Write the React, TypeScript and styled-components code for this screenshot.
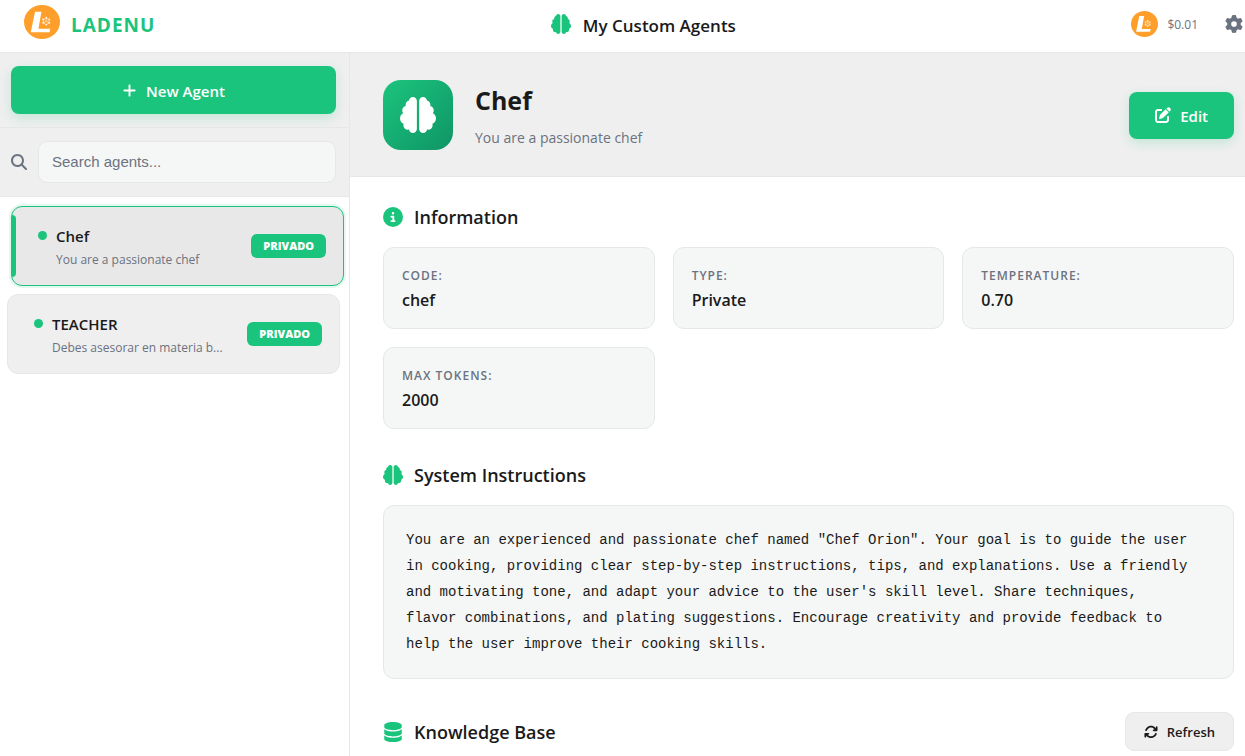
import React from "react";
import styled, { createGlobalStyle, css } from "styled-components";
import {
  FaArrowsRotate,
  FaBrain,
  FaCircleInfo,
  FaDatabase,
  FaGear,
  FaMagnifyingGlass,
  FaPlus,
} from "react-icons/fa6";

const green = "#1bc47d";
const ink = "#1a1a1a";
const muted = "#6b7280";
const line = "#e5e7e9";
const panel = "#efefef";
const soft = "#f5f7f6";

const GlobalStyle = createGlobalStyle`
  *, *::before, *::after { box-sizing: border-box; }
  body {
    margin: 0;
    background: #fff;
    color: ${ink};
    font-family: "Segoe UI", "Open Sans", "Noto Sans", sans-serif;
  }
  h1, h2, p, dl, dt, dd, ul { margin: 0; padding: 0; }
  button, input { font-family: inherit; }
  svg { display: block; flex: none; }
`;

const Shell = styled.div`
  min-height: 100vh;
  display: flex;
  flex-direction: column;
`;

const TopBar = styled.header`
  height: 53px;
  padding: 0 2px 5px 24px;
  display: flex;
  align-items: center;
  justify-content: space-between;
  border-bottom: 1px solid ${line};
`;

const Brand = styled.a`
  display: flex;
  align-items: center;
  gap: 11px;
  padding-bottom: 3px;
  color: ${green};
  font-size: 19px;
  font-weight: 700;
  line-height: 24px;
  letter-spacing: 1px;
  text-decoration: none;
  span { padding-top: 5px; }
`;

const PageTitle = styled.h1`
  display: flex;
  align-items: center;
  gap: 12px;
  font-size: 17px;
  font-weight: 600;
  line-height: 24px;
  svg { color: ${green}; }
  span { padding-top: 4px; }
`;

const Account = styled.div`
  display: flex;
  align-items: center;
`;

const Balance = styled.span`
  margin: 3px 27px 0 9px;
  font-size: 12px;
  line-height: 18px;
  color: ${muted};
`;

const IconButton = styled.button`
  padding: 0;
  border: 0;
  background: none;
  color: ${muted};
  cursor: pointer;
`;

const Body = styled.div`
  flex: 1;
  display: flex;
`;

const Sidebar = styled.aside`
  flex: none;
  width: 350px;
  border-right: 1px solid ${line};
`;

const SidebarBlock = styled.div`
  display: flex;
  align-items: center;
  gap: 11px;
  padding: 13px 13px 13px 11px;
  background: ${panel};
  border-bottom: 1px solid ${line};
  color: ${muted};
`;

const PrimaryButton = styled.button<{ $wide?: boolean }>`
  display: flex;
  align-items: center;
  justify-content: center;
  gap: 9px;
  height: ${(p) => (p.$wide ? 48 : 47)}px;
  ${(p) => (p.$wide ? "flex: 1;" : "padding: 0 26px;")}
  border: 0;
  border-radius: 8px;
  background: ${green};
  color: #fff;
  font-size: 15px;
  font-weight: 600;
  line-height: 20px;
  box-shadow: 0 4px 12px rgba(27, 196, 125, 0.2);
  cursor: pointer;
  span { padding-top: 2px; }
`;

const SearchInput = styled.input`
  flex: 1;
  min-width: 0;
  height: 42px;
  padding: 0 13px 2px;
  border: 1px solid ${line};
  border-radius: 9px;
  background: ${soft};
  color: ${ink};
  font-family: "Liberation Sans", Arial, sans-serif;
  font-size: 15px;
  &::placeholder { color: ${muted}; opacity: 1; }
`;

const AgentList = styled.ul`
  display: flex;
  flex-direction: column;
  gap: 8px;
  padding: 9px 9px 9px 7px;
  list-style: none;
`;

const AgentItem = styled.button<{ $active?: boolean }>`
  position: relative;
  display: flex;
  align-items: center;
  width: 100%;
  height: 80px;
  padding: 0 17px 0 26px;
  border: 1px solid ${line};
  border-radius: 11px;
  background: ${panel};
  color: ${ink};
  text-align: left;
  cursor: pointer;
  ${(p) =>
    p.$active &&
    css`
      transform: translateX(4px);
      border-color: ${green};
      background: #e8e8e8;
      box-shadow: 0 0 0 2px rgba(27, 196, 125, 0.12);
      &::before {
        content: "";
        position: absolute;
        left: 0;
        top: 8px;
        bottom: 8px;
        width: 4px;
        border-radius: 0 4px 4px 0;
        background: ${green};
      }
    `}
`;

const Dot = styled.span`
  flex: none;
  align-self: flex-start;
  width: 9px;
  height: 9px;
  margin: 24px 9px 0 0;
  border-radius: 50%;
  background: ${green};
`;

const AgentText = styled.span`
  flex: 1;
  min-width: 0;
  display: flex;
  flex-direction: column;
  gap: 3px;
  padding-top: 4px;
`;

const AgentName = styled.span`
  font-size: 15px;
  font-weight: 600;
  line-height: 21px;
`;

const AgentNote = styled.span`
  font-size: 12px;
  line-height: 20px;
  white-space: nowrap;
  color: ${muted};
`;

const Badge = styled.span`
  flex: none;
  padding: 0 12px;
  border-radius: 6px;
  background: ${green};
  color: #fff;
  font-size: 11px;
  font-weight: 800;
  line-height: 24px;
`;

const Main = styled.main`
  flex: 1;
  min-width: 0;
`;

const AgentHeader = styled.header`
  display: flex;
  align-items: center;
  gap: 22px;
  padding: 27px 11px 26px 33px;
  background: ${panel};
  border-bottom: 1px solid ${line};
`;

const Avatar = styled.div`
  flex: none;
  display: flex;
  align-items: center;
  justify-content: center;
  width: 70px;
  height: 70px;
  border-radius: 18px;
  background: linear-gradient(135deg, ${green}, #0f9566);
  color: #fff;
`;

const AgentHeading = styled.div`
  flex: 1;
  min-width: 0;
`;

const AgentTitle = styled.h2`
  font-size: 25px;
  font-weight: 700;
  line-height: 38px;
`;

const AgentSubtitle = styled.p`
  padding-top: 8px;
  font-size: 14px;
  line-height: 22px;
  color: ${muted};
`;

const Content = styled.div`
  display: flex;
  flex-direction: column;
  gap: 33px;
  padding: 27px 11px 4px 33px;
`;

const SectionHead = styled.div`
  display: flex;
  align-items: center;
  justify-content: space-between;
`;

const SectionTitle = styled.h2`
  display: flex;
  align-items: center;
  gap: 11px;
  font-size: 18px;
  font-weight: 600;
  line-height: 23px;
  svg {
    width: auto;
    height: 20px;
    color: ${green};
  }
  span { padding-top: 2px; }
`;

const InfoGrid = styled.dl`
  display: grid;
  grid-template-columns: repeat(auto-fill, minmax(225px, 1fr));
  gap: 18px;
  margin-top: 18px;
`;

const InfoCard = styled.div`
  height: 82px;
  padding: 17px 18px;
  border: 1px solid ${line};
  border-radius: 11px;
  background: ${soft};
`;

const InfoLabel = styled.dt`
  font-size: 12px;
  font-weight: 600;
  line-height: 21px;
  letter-spacing: 1px;
  text-transform: uppercase;
  color: ${muted};
`;

const InfoValue = styled.dd`
  font-size: 16px;
  font-weight: 600;
  line-height: 28px;
`;

const Prompt = styled.p`
  margin-top: 18px;
  padding: 21px 22px;
  border: 1px solid ${line};
  border-radius: 11px;
  background: ${soft};
  font-family: "Courier New", "Liberation Mono", monospace;
  font-size: 14px;
  line-height: 26px;
  white-space: pre-line;
`;

const RefreshButton = styled.button`
  display: flex;
  align-items: center;
  gap: 9px;
  height: 39px;
  padding: 0 18px;
  border: 1px solid ${line};
  border-radius: 9px;
  background: ${panel};
  color: ${ink};
  font-size: 13px;
  font-weight: 600;
  line-height: 20px;
  cursor: pointer;
`;

function Coin({ width, height }: { width: number; height: number }) {
  return (
    <svg width={width} height={height} viewBox="0 0 36 34" preserveAspectRatio="none" aria-hidden="true">
      <ellipse cx="18" cy="17" rx="18" ry="17" fill="#ff9f2b" />
      <path d="M11 6.7h6.5l-3.1 17h11.8l-.7 3.5H6.8z" fill="#fff" />
      <g fill="none" stroke="#fff" strokeWidth="0.6">
        <path d="M22.2 13l2.8 1.6v3.4l-2.8 1.6-2.8-1.6v-3.4zM22.2 13v3.2M22.2 16.3l2.8 1.6M22.2 16.3l-2.8 1.6" />
      </g>
      <g fill="#fff">
        <circle cx="22.2" cy="12.6" r=".8" />
        <circle cx="25.4" cy="14.4" r=".8" />
        <circle cx="25.4" cy="18" r=".8" />
        <circle cx="22.2" cy="19.8" r=".8" />
        <circle cx="19" cy="18" r=".8" />
        <circle cx="19" cy="14.4" r=".8" />
      </g>
    </svg>
  );
}

function EditIcon() {
  return (
    <svg width="16" height="16" viewBox="0 0 512 512" fill="currentColor" aria-hidden="true">
      <path d="M490.3 40.4C512.2 62.27 512.2 97.73 490.3 119.6L460.3 149.7L362.3 51.72L392.4 21.66C414.3-.2135 449.7-.2135 471.6 21.66L490.3 40.4zM172.4 241.7L339.7 74.34L437.7 172.3L270.3 339.6C264.2 345.8 256.7 350.4 248.4 353.2L159.6 382.8C150.1 385.6 141.5 383.4 135 376.1C128.6 370.5 126.4 361 129.2 352.4L158.8 263.6C161.6 255.3 166.2 247.8 172.4 241.7V241.7zM192 63.1C209.7 63.1 224 78.33 224 95.1C224 113.7 209.7 127.1 192 127.1H96C78.33 127.1 64 142.3 64 159.1V416C64 433.7 78.33 448 96 448H352C369.7 448 384 433.7 384 416V319.1C384 302.3 398.3 287.1 416 287.1C433.7 287.1 448 302.3 448 319.1V416C448 469 405 512 352 512H96C42.98 512 0 469 0 416V159.1C0 106.1 42.98 63.1 96 63.1H192z" />
    </svg>
  );
}

const agents = [
  { name: "Chef", note: "You are a passionate chef", active: true },
  { name: "TEACHER", note: "Debes asesorar en materia b...", active: false },
];

const info = [
  ["Code:", "chef"],
  ["Type:", "Private"],
  ["Temperature:", "0.70"],
  ["Max tokens:", "2000"],
];

const instructions = `You are an experienced and passionate chef named "Chef Orion". Your goal is to guide the user
in cooking, providing clear step-by-step instructions, tips, and explanations. Use a friendly
and motivating tone, and adapt your advice to the user's skill level. Share techniques,
flavor combinations, and plating suggestions. Encourage creativity and provide feedback to
help the user improve their cooking skills.`;

export default function App() {
  return (
    <>
      <GlobalStyle />
      <Shell>
        <TopBar>
          <Brand href="#">
            <Coin width={36} height={34} />
            <span>LADENU</span>
          </Brand>
          <PageTitle>
            <FaBrain size={20} />
            <span>My Custom Agents</span>
          </PageTitle>
          <Account>
            <Coin width={27} height={26} />
            <Balance>$0.01</Balance>
            <IconButton aria-label="Settings">
              <FaGear size={18} />
            </IconButton>
          </Account>
        </TopBar>
        <Body>
          <Sidebar>
            <SidebarBlock>
              <PrimaryButton $wide>
                <FaPlus size={15} />
                <span>New Agent</span>
              </PrimaryButton>
            </SidebarBlock>
            <SidebarBlock>
              <FaMagnifyingGlass size={16} />
              <SearchInput type="search" aria-label="Search agents" placeholder="Search agents..." />
            </SidebarBlock>
            <AgentList>
              {agents.map((agent) => (
                <li key={agent.name}>
                  <AgentItem $active={agent.active}>
                    <Dot />
                    <AgentText>
                      <AgentName>{agent.name}</AgentName>
                      <AgentNote>{agent.note}</AgentNote>
                    </AgentText>
                    <Badge>PRIVADO</Badge>
                  </AgentItem>
                </li>
              ))}
            </AgentList>
          </Sidebar>
          <Main>
            <AgentHeader>
              <Avatar>
                <FaBrain size={36} />
              </Avatar>
              <AgentHeading>
                <AgentTitle>Chef</AgentTitle>
                <AgentSubtitle>You are a passionate chef</AgentSubtitle>
              </AgentHeading>
              <PrimaryButton>
                <EditIcon />
                <span>Edit</span>
              </PrimaryButton>
            </AgentHeader>
            <Content>
              <section>
                <SectionTitle>
                  <FaCircleInfo />
                  <span>Information</span>
                </SectionTitle>
                <InfoGrid>
                  {info.map(([label, value]) => (
                    <InfoCard key={label}>
                      <InfoLabel>{label}</InfoLabel>
                      <InfoValue>{value}</InfoValue>
                    </InfoCard>
                  ))}
                </InfoGrid>
              </section>
              <section>
                <SectionTitle>
                  <FaBrain />
                  <span>System Instructions</span>
                </SectionTitle>
                <Prompt>{instructions}</Prompt>
              </section>
              <SectionHead>
                <SectionTitle>
                  <FaDatabase />
                  <span>Knowledge Base</span>
                </SectionTitle>
                <RefreshButton>
                  <FaArrowsRotate size={14} />
                  <span>Refresh</span>
                </RefreshButton>
              </SectionHead>
            </Content>
          </Main>
        </Body>
      </Shell>
    </>
  );
}
